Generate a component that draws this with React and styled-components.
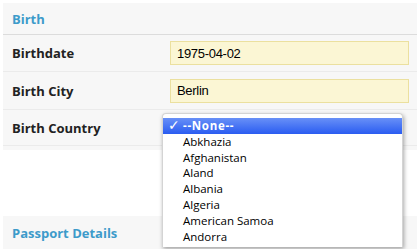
import React from 'react';
import styled, { createGlobalStyle } from 'styled-components';

const GlobalStyle = createGlobalStyle`
	html, body {
		margin: 0;
		padding: 0;
		background: #ffffff;
	}
	body {
		width: 417px;
		height: 249px;
		overflow: hidden;
		font-family: 'Open Sans', 'DejaVu Sans', sans-serif;
	}
`;

const countries = [
	'Abkhazia',
	'Afghanistan',
	'Aland',
	'Albania',
	'Algeria',
	'American Samoa',
	'Andorra',
];

const Page = styled.div`
	padding: 3px 0 0 3px;
	display: flex;
	flex-direction: column;
`;

const Section = styled.section`
	background: #f7f7f7;
	display: flex;
	flex-direction: column;
	padding-bottom: ${props => (props.$tail ? '4px' : '0')};
	margin-top: ${props => props.$gap || '0'};
`;

const SectionTitle = styled.h3`
	margin: 0;
	height: ${props => props.$height || '31px'};
	display: flex;
	align-items: center;
	padding-left: 9px;
	font-size: 13px;
	font-weight: 700;
	color: #3d9bca;
	border-bottom: ${props => (props.$ruled ? '1px solid #dcdcdc' : 'none')};
`;

const Row = styled.div`
	display: flex;
	align-items: center;
	height: ${props => props.$height || '36px'};
	border-bottom: 1px solid #ebebeb;
	padding: 0 8px 0 9px;
`;

const Label = styled.label`
	width: 158px;
	font-size: 13px;
	font-weight: 700;
	color: #222;
`;

const Field = styled.div`
	flex: 1;
	position: relative;
	align-self: stretch;
	display: flex;
	align-items: center;
`;

const Input = styled.input`
	box-sizing: border-box;
	width: 100%;
	height: 24px;
	margin: 0;
	padding: 0 0 0 6px;
	border: 1px solid #ebe09f;
	background: #fbf6d4;
	font-family: 'Liberation Sans', Arial, sans-serif;
	font-size: 13px;
	letter-spacing: -0.3px;
	color: #000;
	outline: none;
`;

const Dropdown = styled.ul`
	position: absolute;
	top: 3px;
	left: -8px;
	width: 239px;
	margin: 0;
	padding: 4px 0 3px;
	list-style: none;
	background: #fff;
	border: 1px solid #d4d4d4;
	border-bottom: none;
	border-radius: 4px 4px 0 0;
	box-shadow: 1px 2px 4px rgba(0, 0, 0, 0.35);
	z-index: 10;
`;

const Option = styled.li`
	position: relative;
	height: 15.8px;
	line-height: 15.8px;
	padding-left: 20px;
	font-size: 11.5px;
	font-weight: ${props => (props.$selected ? 700 : 400)};
	letter-spacing: ${props => (props.$selected ? '0.7px' : '0')};
	color: ${props => (props.$selected ? '#fff' : '#000')};
	background: ${props =>
		props.$selected ? 'linear-gradient(#6890f7, #2a5cf1)' : 'transparent'};
	white-space: nowrap;
`;

const Check = styled.span`
	position: absolute;
	left: 5px;
	top: 0;
	font-family: 'DejaVu Sans', sans-serif;
	font-size: 14px;
	font-weight: 700;
	letter-spacing: 0;
`;

const App = () => (
	<>
		<GlobalStyle />
		<Page>
			<Section $tail>
				<SectionTitle $ruled>Birth</SectionTitle>
				<Row>
					<Label>Birthdate</Label>
					<Field>
						<Input defaultValue='1975-04-02' />
					</Field>
				</Row>
				<Row $height='37px'>
					<Label>Birth City</Label>
					<Field>
						<Input defaultValue='Berlin' />
					</Field>
				</Row>
				<Row $height='35px'>
					<Label>Birth Country</Label>
					<Field>
						<Dropdown>
							<Option $selected>
								<Check>✓</Check>--None--
							</Option>
							{countries.map(c => (
								<Option key={c}>{c}</Option>
							))}
						</Dropdown>
					</Field>
				</Row>
			</Section>
			<Section $gap='66px'>
				<SectionTitle $height='34px'>Passport Details</SectionTitle>
			</Section>
		</Page>
	</>
);

export default App;
